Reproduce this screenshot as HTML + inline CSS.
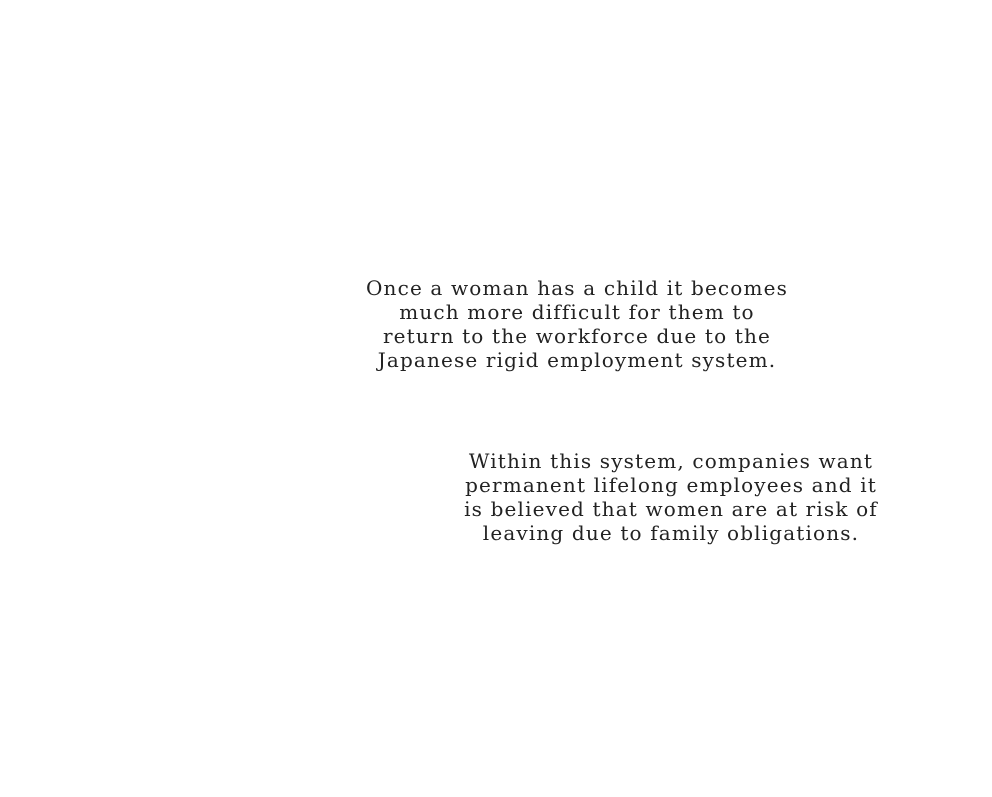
<!DOCTYPE html>
<html><head><meta charset="utf-8"><style>
html,body{margin:0;padding:0;background:#fff;width:992px;height:797px;overflow:hidden}
.t{position:absolute;text-align:center;font-family:"DejaVu Serif","Liberation Serif",serif;font-size:20px;line-height:24px;color:#222;white-space:nowrap;letter-spacing:1.15px}
</style></head><body>
<div class="t" style="left:327px;width:500px;top:276px">Once a woman has a child it becomes<br>much more difficult for them to<br>return to the workforce due to the<br>Japanese rigid employment system.</div>
<div class="t" style="left:421px;width:500px;top:449px">Within this system, companies want<br>permanent lifelong employees and it<br>is believed that women are at risk of<br>leaving due to family obligations.</div>
</body></html>
